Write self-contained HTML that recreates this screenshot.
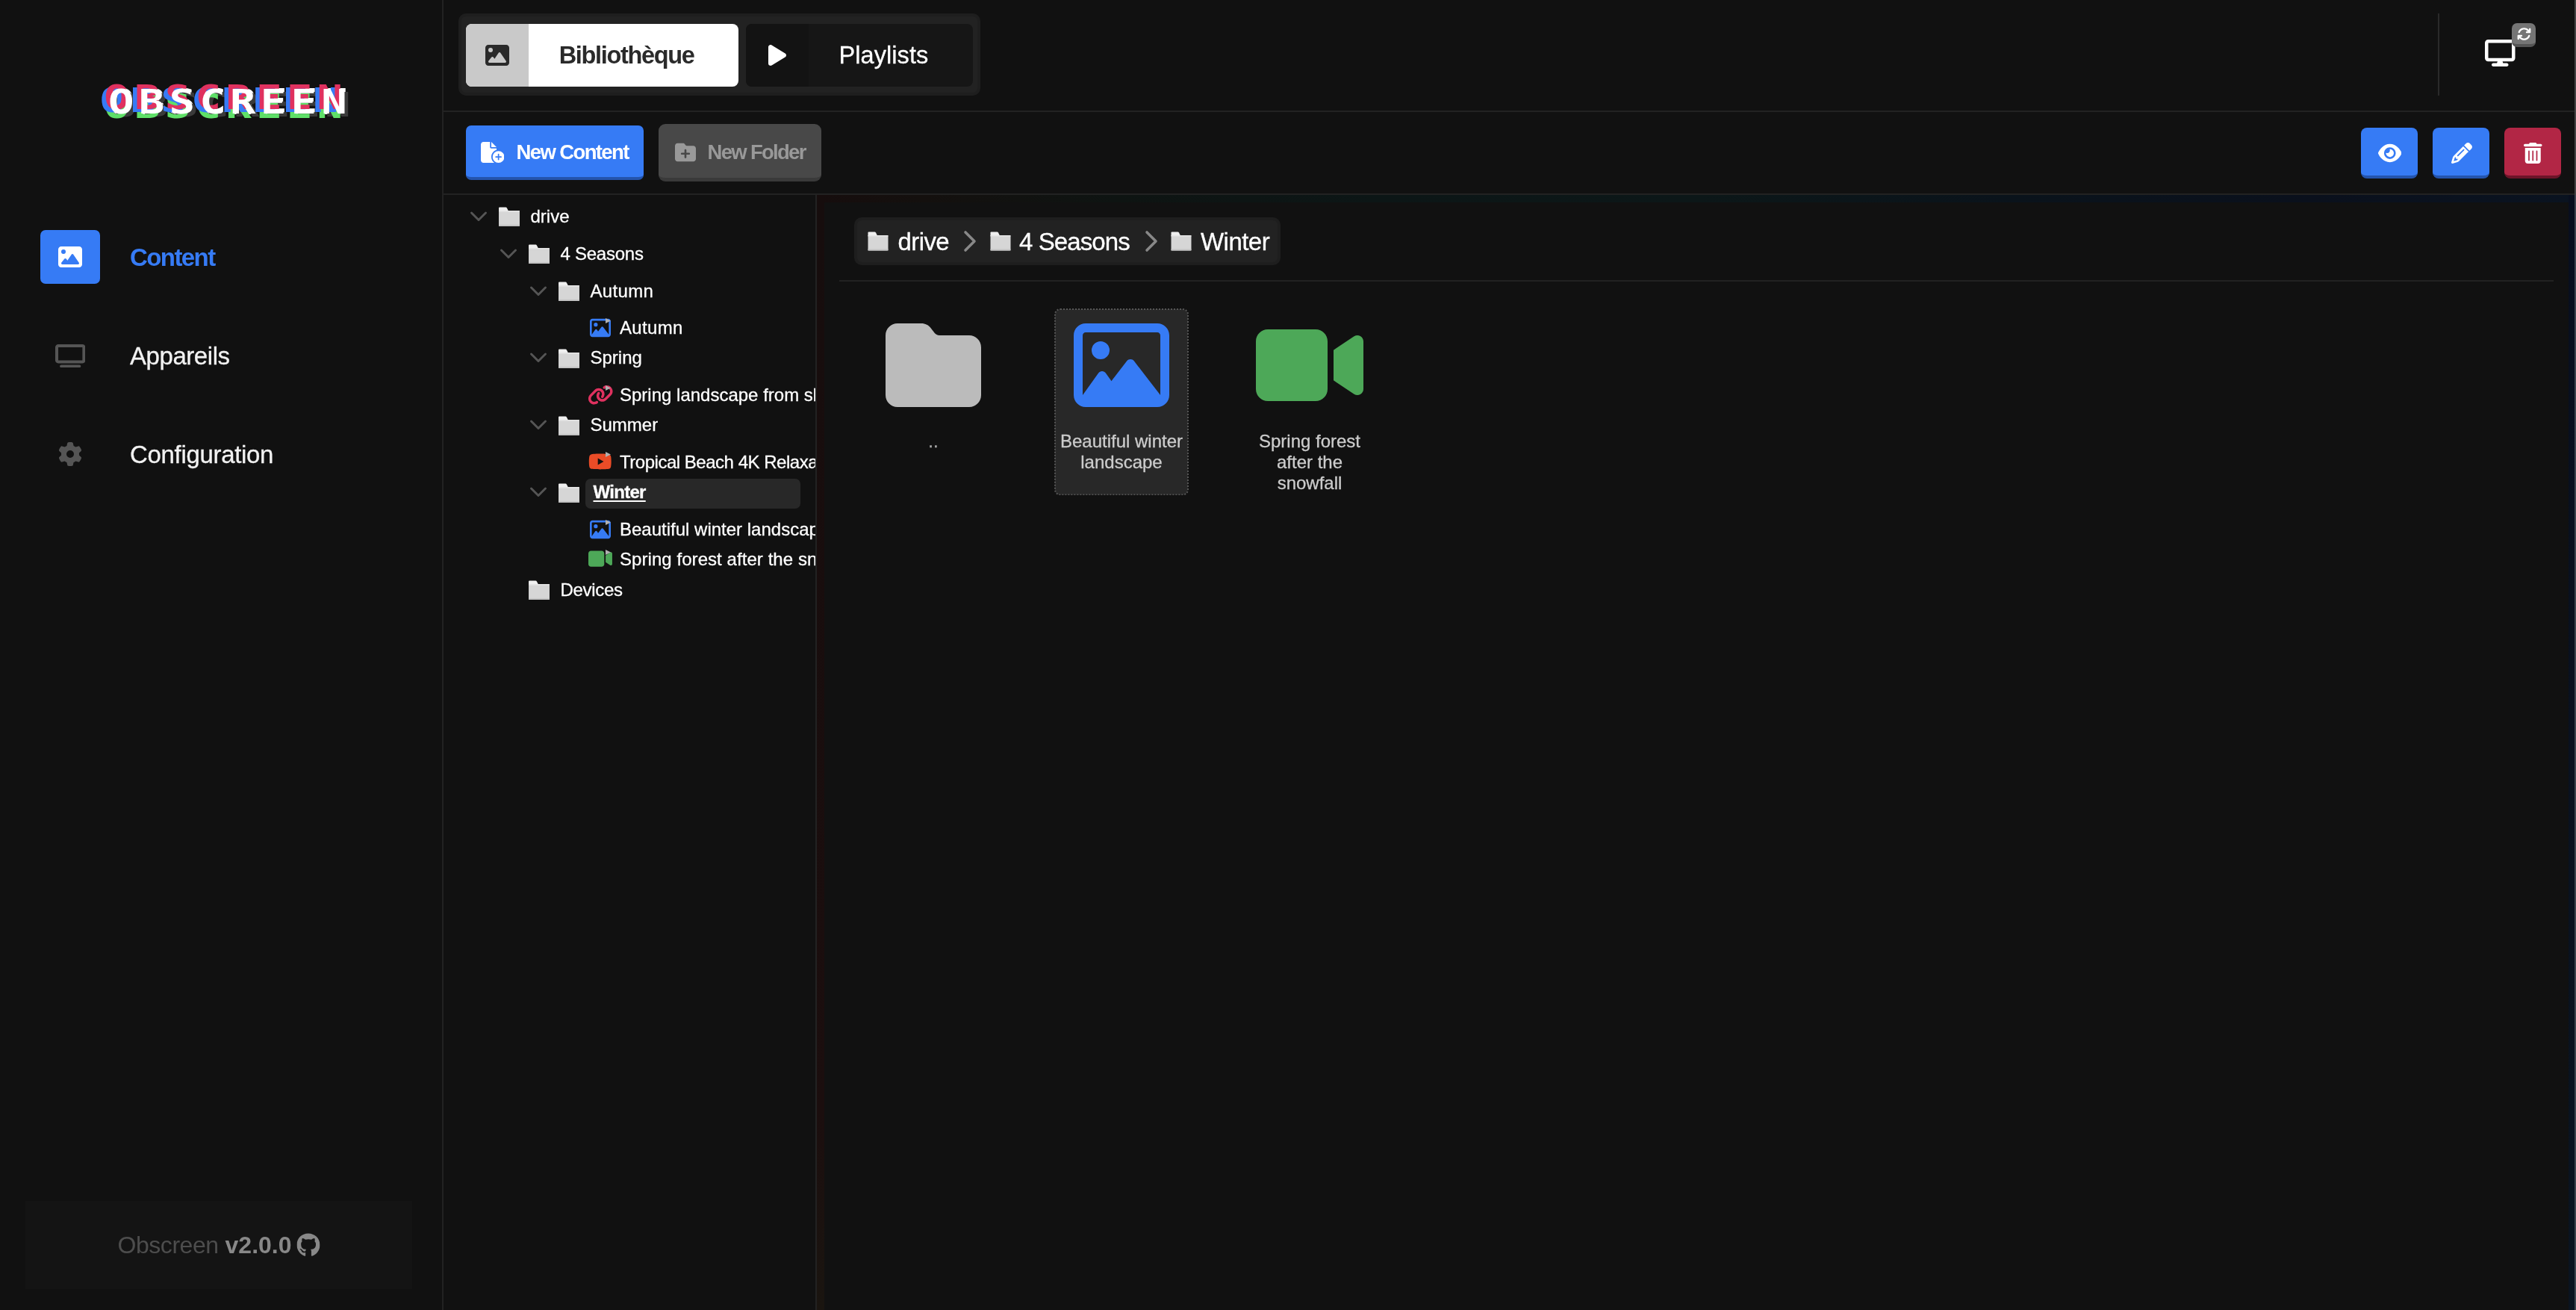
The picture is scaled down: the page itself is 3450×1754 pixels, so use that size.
<!DOCTYPE html>
<html lang="fr"><head><meta charset="utf-8"><title>Obscreen</title><style>
*{box-sizing:border-box;margin:0;padding:0}
html,body{width:3450px;height:1754px;overflow:hidden;background:#111;color:#fff;font-family:"Liberation Sans",sans-serif;}
.abs{position:absolute}
.t{position:absolute;white-space:nowrap;line-height:1;}
svg{display:block}
.hl{position:absolute;background:#222;height:2px}
.vl{position:absolute;background:#222;width:2px}
.tt{font-size:24px;letter-spacing:0;color:#fff;-webkit-text-stroke:0.3px #fff}
.lbl{-webkit-text-stroke:0.3px #ccc;position:absolute;text-align:center;font-size:24px;line-height:28.2px;color:#ccc;transform:translate(-50%,0);white-space:nowrap}
</style></head><body>
<div id="app" style="position:absolute;left:0;top:0;width:3450px;height:1754px;will-change:transform">
<div class="vl" style="left:592px;top:0;height:1754px"></div>
<div class="t" id="logo" style="left:308.2px;top:136.6px;transform:translate(-50%,-50%) scaleX(1.29);font-family:'DejaVu Sans Mono','Liberation Mono',monospace;font-weight:700;font-size:44.5px;letter-spacing:4.8px;color:#fff;-webkit-text-stroke:2px #fff;paint-order:stroke fill;text-shadow:-4.4px -6px 0 #e0315f,-8.7px -2px 0 #367bf5,-4.4px 6.5px 0 #5fe068,3.6px 4px 0 #3a3a3a;">OBSCREEN</div>
<div class="abs" style="left:54px;top:308px;width:80px;height:72px;background:#367BF5;border-radius:7px"></div>
<div class="abs" style="left:78.00px;top:328.00px;"><svg viewBox="0 0 512 512" width="32.00" height="32.00" style=""><path fill="#fff" d="M0 96C0 60.7 28.7 32 64 32l384 0c35.3 0 64 28.700 64 64l0 320c0 35.300-28.700 64-64 64L64 480c-35.300 0-64-28.700-64-64L0 96zM323.800 202.500c-4.500-6.600-11.900-10.500-19.800-10.500s-15.400 3.900-19.800 10.500l-87 127.600L170.700 297c-4.600-5.700-11.500-9-18.700-9s-14.200 3.300-18.700 9l-64 80c-5.800 7.200-6.900 17.100-2.900 25.400s12.400 13.600 21.600 13.600l96 0 32 0 208 0c8.900 0 17.100-4.900 21.200-12.800s3.600-17.400-1.400-24.700l-120-176zM112 192a48 48 0 1 0 0-96 48 48 0 1 0 0 96z"/></svg></div>
<div class="t" id="t1" style="left:174px;top:343.5px;font-size:33px;color:#367BF5;font-weight:700;transform:translate(0,-50%);letter-spacing:-1.582px;">Content</div>
<div class="abs" style="left:73.8px;top:460.5px"><svg preserveAspectRatio="none" viewBox="0 0 640 512" width="40.40" height="31.30" style=""><path fill="#555" d="M64 64V352H576V64H64zM0 64C0 28.700 28.700 0 64 0H576c35.300 0 64 28.700 64 64V352c0 35.300-28.700 64-64 64H64c-35.300 0-64-28.700-64-64V64zM128 448H512c17.700 0 32 14.300 32 32s-14.300 32-32 32H128c-17.700 0-32-14.300-32-32s14.300-32 32-32z"/></svg></div>
<div class="t" id="t2" style="left:174px;top:475.5px;font-size:33px;color:#f2f2f2;font-weight:400;transform:translate(0,-50%);letter-spacing:-0.441px;-webkit-text-stroke:0.3px #f2f2f2;">Appareils</div>
<div class="abs" style="left:78.00px;top:591.90px;"><svg viewBox="0 0 512 512" width="32.00" height="32.00" style=""><path fill="#555" d="M495.900 166.600c3.200 8.700 .5 18.400-6.400 24.600l-43.300 39.400c1.100 8.300 1.700 16.800 1.700 25.400s-.6 17.100-1.700 25.400l43.300 39.400c6.900 6.200 9.600 15.900 6.400 24.600c-4.400 11.900-9.700 23.300-15.800 34.300l-4.700 8.100c-6.600 11-14 21.400-22.100 31.200c-5.900 7.200-15.700 9.600-24.500 6.800l-55.700-17.700c-13.400 10.300-28.200 18.900-44 25.400l-12.500 57.100c-2 9.100-9 16.300-18.200 17.800c-13.800 2.300-28 3.500-42.500 3.500s-28.700-1.200-42.500-3.500c-9.200-1.500-16.200-8.700-18.200-17.800l-12.500-57.100c-15.800-6.500-30.600-15.100-44-25.400L83.100 425.900c-8.800 2.800-18.600 .3-24.500-6.800c-8.100-9.800-15.500-20.200-22.100-31.200l-4.700-8.100c-6.100-11-11.400-22.400-15.800-34.300c-3.200-8.700-.5-18.400 6.400-24.600l43.300-39.400C64.600 273.100 64 264.600 64 256s.6-17.100 1.700-25.400L22.400 191.200c-6.900-6.200-9.600-15.900-6.400-24.600c4.400-11.900 9.700-23.300 15.800-34.300l4.700-8.100c6.600-11 14-21.400 22.100-31.200c5.900-7.200 15.700-9.600 24.500-6.800l55.700 17.700c13.400-10.300 28.200-18.900 44-25.400l12.500-57.100c2-9.100 9-16.300 18.200-17.800C227.300 1.200 241.500 0 256 0s28.700 1.200 42.500 3.500c9.200 1.500 16.200 8.700 18.200 17.800l12.500 57.100c15.800 6.500 30.600 15.100 44 25.400l55.700-17.700c8.800-2.800 18.600-.3 24.500 6.800c8.100 9.800 15.500 20.200 22.100 31.200l4.700 8.100c6.100 11 11.400 22.400 15.800 34.300zM256 336a80 80 0 1 0 0-160 80 80 0 1 0 0 160z"/></svg></div>
<div class="t" id="t3" style="left:174px;top:607.5px;font-size:33px;color:#f2f2f2;font-weight:400;transform:translate(0,-50%);letter-spacing:-0.321px;-webkit-text-stroke:0.3px #f2f2f2;">Configuration</div>
<div class="abs" style="left:34px;top:1608px;width:518px;height:118px;background:#141414"></div>
<div class="t" id="foot" style="left:293px;top:1667px;transform:translate(-50%,-50%);font-size:32px;color:#4d4d4d;display:flex;align-items:center"><span style="letter-spacing:-0.45px">Obscreen</span>&nbsp;<b style="color:#888">v2.0.0</b><svg viewBox="0 0 496 512" width="31.00" height="32.00" style="margin-left:7px"><path fill="#888" d="M165.900 397.400c0 2-2.300 3.600-5.200 3.600-3.300.3-5.600-1.300-5.600-3.600 0-2 2.300-3.600 5.200-3.600 3-.3 5.600 1.300 5.600 3.600zm-31.100-4.500c-.7 2 1.300 4.300 4.300 4.900 2.600 1 5.600 0 6.200-2s-1.300-4.300-4.300-5.200c-2.600-.7-5.500.3-6.200 2.300zm44.200-1.700c-2.900.7-4.900 2.600-4.600 4.900.3 2 2.900 3.300 5.900 2.600 2.900-.7 4.900-2.600 4.600-4.600-.3-1.900-3-3.200-5.900-2.900zM244.800 8C106.100 8 0 113.300 0 252c0 110.900 69.800 205.800 169.500 239.200 12.800 2.300 17.300-5.600 17.300-12.100 0-6.200-.3-40.400-.3-61.400 0 0-70 15-84.700-29.800 0 0-11.400-29.100-27.800-36.600 0 0-22.900-15.700 1.600-15.400 0 0 24.900 2 38.600 25.800 21.900 38.600 58.600 27.500 72.900 20.900 2.300-16 8.800-27.100 16-33.700-55.900-6.200-112.300-14.300-112.300-110.500 0-27.500 7.600-41.300 23.600-58.900-2.600-6.500-11.100-33.300 2.600-67.900 20.900-6.500 69 27 69 27 20-5.600 41.500-8.500 62.800-8.500s42.800 2.900 62.800 8.500c0 0 48.100-33.600 69-27 13.700 34.700 5.200 61.400 2.600 67.900 16 17.700 25.800 31.500 25.800 58.900 0 96.500-58.900 104.200-114.800 110.500 9.200 7.900 17 22.900 17 46.400 0 33.700-.3 75.400-.3 83.600 0 6.500 4.600 14.400 17.300 12.100C428.200 457.800 496 362.900 496 252 496 113.300 383.500 8 244.800 8z"/></svg></div>
<div class="abs" style="left:614px;top:18px;width:699px;height:110px;background:#222;border:4px solid #1e1e1e;border-radius:10px"></div>
<div class="abs" style="left:624px;top:32px;width:365px;height:84px;background:#fff;border-radius:8px;overflow:hidden"><div style="width:84px;height:84px;background:#c9c9c9"></div></div>
<div class="abs" style="left:650.00px;top:58.00px;"><svg viewBox="0 0 512 512" width="32.00" height="32.00" style=""><path fill="#2a2a2a" d="M0 96C0 60.7 28.7 32 64 32l384 0c35.3 0 64 28.700 64 64l0 320c0 35.300-28.700 64-64 64L64 480c-35.300 0-64-28.700-64-64L0 96zM323.800 202.500c-4.500-6.600-11.900-10.500-19.800-10.500s-15.400 3.900-19.800 10.500l-87 127.600L170.700 297c-4.600-5.700-11.500-9-18.700-9s-14.200 3.300-18.700 9l-64 80c-5.800 7.200-6.900 17.100-2.900 25.400s12.400 13.600 21.600 13.600l96 0 32 0 208 0c8.900 0 17.100-4.900 21.200-12.800s3.600-17.400-1.400-24.700l-120-176zM112 192a48 48 0 1 0 0-96 48 48 0 1 0 0 96z"/></svg></div>
<div class="t" id="t4" style="left:748.7px;top:73.9px;font-size:32.5px;color:#2a2a2a;font-weight:700;transform:translate(0,-50%);letter-spacing:-1.334px;">Bibliothèque</div>
<div class="abs" style="left:999px;top:32px;width:304px;height:84px;background:#161616;border-radius:8px;overflow:hidden"><div style="width:84px;height:84px;background:#131313"></div></div>
<div class="abs" style="left:1029.00px;top:58.00px;"><svg viewBox="0 0 384 512" width="24.00" height="32.00" style=""><path fill="#fff" d="M73 39c-14.800-9.100-33.400-9.400-48.500-.9S0 62.600 0 80L0 432c0 17.400 9.400 33.400 24.500 41.900s33.700 8.100 48.500-.9L361 297c14.300-8.700 23-24.200 23-41s-8.700-32.200-23-41L73 39z"/></svg></div>
<div class="t" id="t5" style="left:1123.6px;top:73.9px;font-size:32.5px;color:#fff;font-weight:400;transform:translate(0,-50%);letter-spacing:0.053px;-webkit-text-stroke:0.3px #fff;">Playlists</div>
<div class="vl" style="left:3265px;top:18px;height:110px;background:#2a2a2a"></div>
<div class="abs" style="left:3328.25px;top:53.20px;"><svg viewBox="0 0 576 512" width="40.50" height="36.00" style=""><path fill="#fff" d="M64 0C28.700 0 0 28.700 0 64V352c0 35.300 28.700 64 64 64H240l-10.700 32H160c-17.700 0-32 14.300-32 32s14.300 32 32 32H416c17.700 0 32-14.300 32-32s-14.300-32-32-32H346.700L336 416H512c35.300 0 64-28.700 64-64V64c0-35.300-28.700-64-64-64H64zM512 64V352H64V64H512z"/></svg></div>
<div class="abs" style="left:3364px;top:31px;width:32px;height:32px;background:#757575;border-bottom:4px solid #555;border-radius:7px"></div>
<div class="abs" style="left:3371.10px;top:35.70px;"><svg viewBox="0 0 512 512" width="19.00" height="19.00" style=""><path fill="#fff" d="M105.100 202.600c7.700-21.800 20.200-42.300 37.800-59.800c62.500-62.500 163.800-62.500 226.300 0L386.300 160H352c-17.700 0-32 14.300-32 32s14.300 32 32 32H463.500c0 0 0 0 0 0h.4c17.700 0 32-14.300 32-32V80c0-17.700-14.300-32-32-32s-32 14.300-32 32v35.200L414.400 97.600c-87.500-87.500-229.300-87.500-316.800 0C73.200 122 55.600 150.700 44.800 181.400c-5.900 16.700 2.900 34.900 19.500 40.800s34.900-2.900 40.800-19.500zM39 289.300c-5 1.500-9.800 4.200-13.700 8.200c-4 4-6.700 8.800-8.100 14c-.3 1.200-.6 2.500-.8 3.800c-.3 1.700-.4 3.400-.4 5.100V432c0 17.700 14.300 32 32 32s32-14.300 32-32V396.900l17.600 17.500 0 0c87.500 87.400 229.300 87.400 316.700 0c24.400-24.400 42.100-53.100 52.900-83.700c5.900-16.700-2.900-34.900-19.500-40.800s-34.900 2.900-40.800 19.500c-7.700 21.800-20.200 42.300-37.800 59.800c-62.500 62.500-163.800 62.500-226.300 0l-.1-.1L125.600 352H160c17.700 0 32-14.300 32-32s-14.300-32-32-32H48.400c-1.600 0-3.200 .1-4.800 .3s-3.100 .5-4.600 1z"/></svg></div>
<div class="hl" style="left:594px;top:148px;width:2856px"></div>
<div class="abs" style="left:624px;top:168px;width:238px;height:73px;background:#367BF5;border-bottom:4px solid #2454ad;border-radius:7px"></div>
<div class="abs" style="left:643.85px;top:189.60px;"><svg viewBox="0 0 576 512" width="31.50" height="28.00" style=""><path fill="#fff" d="M0 64C0 28.700 28.700 0 64 0H224V128c0 17.700 14.300 32 32 32H384v38.600C310.100 219.500 256 287.400 256 368c0 59.100 29.100 111.300 73.700 143.300c-3.200 .5-6.400 .7-9.700 .7H64c-35.300 0-64-28.700-64-64V64zm384 64H256V0L384 128zm48 96a144 144 0 1 1 0 288 144 144 0 1 1 0-288zm16 80c0-8.800-7.200-16-16-16s-16 7.200-16 16v48H368c-8.800 0-16 7.200-16 16s7.200 16 16 16h48v48c0 8.800 7.200 16 16 16s16-7.200 16-16V384h48c8.800 0 16-7.200 16-16s-7.200-16-16-16H448V304z"/></svg></div>
<div class="t" id="t6" style="left:691.5px;top:204px;font-size:27.5px;color:#fff;font-weight:700;transform:translate(0,-50%);letter-spacing:-1.619px;">New Content</div>
<div class="abs" style="left:882px;top:166px;width:218px;height:77px;background:#484848;border-bottom:5px solid #3a3a3a;border-radius:9px"></div>
<div class="abs" style="left:903.50px;top:189.70px;"><svg viewBox="0 0 512 512" width="28.00" height="28.00" style=""><path fill="#999" d="M512 416c0 35.300-28.700 64-64 64H64c-35.300 0-64-28.700-64-64V96C0 60.700 28.700 32 64 32H192c20.100 0 39.100 9.500 51.200 25.600l19.200 25.600c6 8.100 15.500 12.800 25.600 12.800H448c35.300 0 64 28.700 64 64V416zM232 376c0 13.300 10.700 24 24 24s24-10.700 24-24V312h64c13.300 0 24-10.700 24-24s-10.700-24-24-24H280V200c0-13.300-10.700-24-24-24s-24 10.700-24 24v64H168c-13.300 0-24 10.700-24 24s10.700 24 24 24h64v64z"/></svg></div>
<div class="t" id="t7" style="left:947.6px;top:204px;font-size:27.5px;color:#999;font-weight:700;transform:translate(0,-50%);letter-spacing:-1.716px;">New Folder</div>
<div class="abs" style="left:3162px;top:171px;width:76px;height:68px;background:#367BF5;border-bottom:4px solid #2454ad;border-radius:8px"></div>
<div class="abs" style="left:3184.75px;top:190.60px;"><svg viewBox="0 0 576 512" width="31.50" height="28.00" style=""><path fill="#fff" d="M288 32c-80.800 0-145.500 36.800-192.600 80.600C48.600 156 17.300 208 2.500 243.700c-3.300 7.900-3.300 16.700 0 24.600C17.300 304 48.600 356 95.400 399.400C142.500 443.200 207.200 480 288 480s145.500-36.800 192.600-80.600c46.800-43.500 78.100-95.400 93-131.100c3.300-7.900 3.300-16.700 0-24.600c-14.900-35.700-46.200-87.700-93-131.100C433.500 68.800 368.800 32 288 32zM144 256a144 144 0 1 1 288 0 144 144 0 1 1 -288 0zm144-64c0 35.300-28.700 64-64 64c-7.100 0-13.900-1.200-20.300-3.300c-5.500-1.800-11.900 1.600-11.700 7.400c.3 6.900 1.300 13.800 3.200 20.700c13.700 51.200 66.400 81.600 117.600 67.900s81.600-66.400 67.900-117.600c-11.100-41.500-47.800-69.400-88.600-71.100c-5.800-.2-9.200 6.100-7.400 11.700c2.100 6.400 3.300 13.200 3.300 20.300z"/></svg></div>
<div class="abs" style="left:3258px;top:171px;width:76px;height:68px;background:#367BF5;border-bottom:4px solid #2454ad;border-radius:8px"></div>
<div class="abs" style="left:3282.50px;top:190.60px;"><svg viewBox="0 0 512 512" width="28.00" height="28.00" style=""><path fill="#fff" d="M410.300 231l11.300-11.300-33.900-33.900-62.100-62.100L291.700 89.800l-11.300 11.300-22.600 22.600L58.600 322.900c-10.400 10.400-18 23.300-22.200 37.400L1 480.700c-2.500 8.400-.2 17.500 6.100 23.700s15.300 8.500 23.700 6.100l120.300-35.400c14.100-4.200 27-11.800 37.400-22.200L387.700 253.700 410.300 231zM160 399.400l-9.100 22.700c-4 3.100-8.500 5.400-13.300 6.900L59.400 452l23-78.100c1.400-4.900 3.800-9.400 6.900-13.300l22.700-9.100v32c0 8.800 7.200 16 16 16h32zM362.700 18.700L348.300 33.200 325.700 55.800 314.300 67.100l33.900 33.900 62.100 62.100 33.900 33.900 11.300-11.300 22.600-22.600 14.500-14.500c25-25 25-65.500 0-90.500L453.300 18.700c-25-25-65.500-25-90.500 0zm-47.400 168l-144 144c-6.200 6.200-16.400 6.200-22.600 0s-6.200-16.400 0-22.600l144-144c6.200-6.200 16.400-6.200 22.600 0s6.200 16.400 0 22.600z"/></svg></div>
<div class="abs" style="left:3354px;top:171px;width:76px;height:68px;background:#b22645;border-bottom:4px solid #6d1429;border-radius:8px"></div>
<div class="abs" style="left:3380.25px;top:190.60px;"><svg viewBox="0 0 448 512" width="24.50" height="28.00" style=""><path fill="#fff" d="M135.200 17.700C140.600 6.800 151.700 0 163.800 0H284.200c12.100 0 23.200 6.800 28.600 17.700L320 32h96c17.700 0 32 14.300 32 32s-14.300 32-32 32H32C14.300 96 0 81.700 0 64S14.300 32 32 32h96l7.200-14.300zM32 128H416V448c0 35.300-28.700 64-64 64H96c-35.300 0-64-28.700-64-64V128zm96 64c-8.800 0-16 7.200-16 16V432c0 8.800 7.200 16 16 16s16-7.200 16-16V208c0-8.800-7.200-16-16-16zm96 0c-8.800 0-16 7.200-16 16V432c0 8.800 7.200 16 16 16s16-7.200 16-16V208c0-8.800-7.200-16-16-16zm96 0c-8.800 0-16 7.200-16 16V432c0 8.800 7.200 16 16 16s16-7.200 16-16V208c0-8.800-7.200-16-16-16z"/></svg></div>
<div class="hl" style="left:594px;top:259px;width:2856px"></div>
<div class="vl" style="left:3448px;top:0;height:1754px;background:linear-gradient(180deg,#434343 0,#434343 261px,#3b424d 261px,#3b434c 100%)"></div>
<div class="vl" style="left:1092px;top:261px;height:1493px"></div>
<div class="abs" id="tree" style="left:594px;top:261px;width:498px;height:1493px;overflow:hidden">
<svg class="abs" style="left:35px;top:20.799999999999955px" width="24" height="16" viewBox="0 0 24 16"><polyline points="2.5,3 12,12.5 21.5,3" fill="none" stroke="#555" stroke-width="3" stroke-linecap="round" stroke-linejoin="round"/></svg>
<svg class="abs" style="left:73px;top:16.349999999999966px;filter:blur(.6px)" width="29.5" height="26.5" viewBox="0 0 57 52" preserveAspectRatio="none"><path d="M2 3 Q2 1 4 1 L20 1 Q22 1 23 3 L27 11 L2 11 Z" fill="#efefef"/><path d="M2 10 L53 10 Q56 10 56 13 L56 48 Q56 51 53 51 L4 51 Q2 51 2 49 Z" fill="#d6d6d6"/><rect x="2" y="10" width="54" height="3" fill="#e6e6e6"/><rect x="2" y="47" width="54" height="4" fill="#c4c4c4"/></svg>
<div class="t tt" style="left:116.5px;top:16.599999999999977px;font-weight:400;">drive</div>
<svg class="abs" style="left:75px;top:70.69999999999999px" width="24" height="16" viewBox="0 0 24 16"><polyline points="2.5,3 12,12.5 21.5,3" fill="none" stroke="#555" stroke-width="3" stroke-linecap="round" stroke-linejoin="round"/></svg>
<svg class="abs" style="left:113px;top:66.25px;filter:blur(.6px)" width="29.5" height="26.5" viewBox="0 0 57 52" preserveAspectRatio="none"><path d="M2 3 Q2 1 4 1 L20 1 Q22 1 23 3 L27 11 L2 11 Z" fill="#efefef"/><path d="M2 10 L53 10 Q56 10 56 13 L56 48 Q56 51 53 51 L4 51 Q2 51 2 49 Z" fill="#d6d6d6"/><rect x="2" y="10" width="54" height="3" fill="#e6e6e6"/><rect x="2" y="47" width="54" height="4" fill="#c4c4c4"/></svg>
<div class="t tt" style="left:156.5px;top:66.50000000000001px;font-weight:400;letter-spacing:-0.25px;">4 Seasons</div>
<svg class="abs" style="left:115px;top:120.69999999999999px" width="24" height="16" viewBox="0 0 24 16"><polyline points="2.5,3 12,12.5 21.5,3" fill="none" stroke="#555" stroke-width="3" stroke-linecap="round" stroke-linejoin="round"/></svg>
<svg class="abs" style="left:153px;top:116.25px;filter:blur(.6px)" width="29.5" height="26.5" viewBox="0 0 57 52" preserveAspectRatio="none"><path d="M2 3 Q2 1 4 1 L20 1 Q22 1 23 3 L27 11 L2 11 Z" fill="#efefef"/><path d="M2 10 L53 10 Q56 10 56 13 L56 48 Q56 51 53 51 L4 51 Q2 51 2 49 Z" fill="#d6d6d6"/><rect x="2" y="10" width="54" height="3" fill="#e6e6e6"/><rect x="2" y="47" width="54" height="4" fill="#c4c4c4"/></svg>
<div class="t tt" style="left:196.5px;top:116.50000000000001px;font-weight:400;letter-spacing:0.35px;">Autumn</div>
<div class="abs" style="left:196.00px;top:163.80px"><svg viewBox="0 0 512 512" width="28.00" height="28.00" style=""><path fill="#367BF5" d="M448 80c8.800 0 16 7.200 16 16V415.800l-5-6.500-136-176c-4.500-5.900-11.600-9.300-19-9.300s-14.400 3.400-19 9.300L202 340.700l-30.500-42.700C167 291.700 159.800 288 152 288s-15 3.700-19.500 10.100l-80 112L48 416.300l0-.3V96c0-8.800 7.200-16 16-16H448zM64 32C28.700 32 0 60.700 0 96V416c0 35.300 28.700 64 64 64H448c35.300 0 64-28.700 64-64V96c0-35.300-28.700-64-64-64H64zm80 192a48 48 0 1 0 0-96 48 48 0 1 0 0 96z"/></svg></div>
<svg class="abs" style="left:217px;top:164.60000000000002px" width="7" height="7" viewBox="0 0 7 7"><path d="M0 0 L7 3.5 L0 7 Z" fill="#b0b0b0"/></svg>
<div class="t tt" style="left:236px;top:165.8px;font-weight:400;letter-spacing:0.35px;">Autumn</div>
<svg class="abs" style="left:115px;top:210.2px" width="24" height="16" viewBox="0 0 24 16"><polyline points="2.5,3 12,12.5 21.5,3" fill="none" stroke="#555" stroke-width="3" stroke-linecap="round" stroke-linejoin="round"/></svg>
<svg class="abs" style="left:153px;top:205.75px;filter:blur(.6px)" width="29.5" height="26.5" viewBox="0 0 57 52" preserveAspectRatio="none"><path d="M2 3 Q2 1 4 1 L20 1 Q22 1 23 3 L27 11 L2 11 Z" fill="#efefef"/><path d="M2 10 L53 10 Q56 10 56 13 L56 48 Q56 51 53 51 L4 51 Q2 51 2 49 Z" fill="#d6d6d6"/><rect x="2" y="10" width="54" height="3" fill="#e6e6e6"/><rect x="2" y="47" width="54" height="4" fill="#c4c4c4"/></svg>
<div class="t tt" style="left:196.5px;top:206.0px;font-weight:400;">Spring</div>
<div class="abs" style="left:192.75px;top:254.10px"><svg viewBox="0 0 640 512" width="34.50" height="27.60" style=""><path fill="#e0315f" d="M579.800 267.700c56.500-56.500 56.500-148 0-204.500c-50-50-128.800-56.500-186.300-15.400l-1.600 1.100c-14.400 10.300-17.700 30.300-7.400 44.600s30.300 17.700 44.600 7.400l1.600-1.100c32.100-22.900 76-19.300 103.800 8.600c31.500 31.500 31.500 82.500 0 114L422.300 334.800c-31.500 31.500-82.500 31.500-114 0c-27.900-27.900-31.500-71.800-8.600-103.800l1.100-1.600c10.300-14.400 6.900-34.400-7.400-44.600s-34.400-6.900-44.600 7.400l-1.100 1.600C206.500 251.200 213 330 263 380c56.500 56.500 148 56.500 204.500 0L579.800 267.700zM60.200 244.300c-56.500 56.500-56.500 148 0 204.500c50 50 128.800 56.500 186.300 15.400l1.600-1.100c14.400-10.300 17.700-30.300 7.400-44.600s-30.300-17.700-44.600-7.400l-1.600 1.100c-32.100 22.900-76 19.300-103.800-8.600C74 372 74 321 105.500 289.500L217.700 177.200c31.500-31.500 82.500-31.500 114 0c27.900 27.900 31.500 71.800 8.600 103.900l-1.100 1.600c-10.300 14.400-6.900 34.400 7.400 44.600s34.400 6.900 44.600-7.400l1.100-1.600C433.500 260.800 427 182 377 132c-56.500-56.500-148-56.500-204.500 0L60.200 244.300z"/></svg></div>
<svg class="abs" style="left:217px;top:254.79999999999995px" width="7" height="7" viewBox="0 0 7 7"><path d="M0 0 L7 3.5 L0 7 Z" fill="#b0b0b0"/></svg>
<div class="t tt" style="left:236px;top:255.99999999999994px;font-weight:400;">Spring landscape from sky</div>
<svg class="abs" style="left:115px;top:300.0px" width="24" height="16" viewBox="0 0 24 16"><polyline points="2.5,3 12,12.5 21.5,3" fill="none" stroke="#555" stroke-width="3" stroke-linecap="round" stroke-linejoin="round"/></svg>
<svg class="abs" style="left:153px;top:295.55000000000007px;filter:blur(.6px)" width="29.5" height="26.5" viewBox="0 0 57 52" preserveAspectRatio="none"><path d="M2 3 Q2 1 4 1 L20 1 Q22 1 23 3 L27 11 L2 11 Z" fill="#efefef"/><path d="M2 10 L53 10 Q56 10 56 13 L56 48 Q56 51 53 51 L4 51 Q2 51 2 49 Z" fill="#d6d6d6"/><rect x="2" y="10" width="54" height="3" fill="#e6e6e6"/><rect x="2" y="47" width="54" height="4" fill="#c4c4c4"/></svg>
<div class="t tt" style="left:196.5px;top:295.8px;font-weight:400;">Summer</div>
<div class="abs" style="left:201px;top:349.4px;width:16px;height:16px;background:#111"></div>
<div class="abs" style="left:194.25px;top:343.40px"><svg viewBox="0 0 576 512" width="31.50" height="28.00" style=""><path fill="#ea4c27" d="M549.655 124.083c-6.281-23.650-24.787-42.276-48.284-48.597C458.781 64 288 64 288 64S117.220 64 74.629 75.486c-23.497 6.322-42.003 24.947-48.284 48.597-11.412 42.867-11.412 132.305-11.412 132.305s0 89.438 11.412 132.305c6.281 23.650 24.787 41.500 48.284 47.821C117.220 448 288 448 288 448s170.780 0 213.371-11.486c23.497-6.321 42.003-24.171 48.284-47.821 11.412-42.867 11.412-132.305 11.412-132.305s0-89.438-11.412-132.305zm-317.510 213.508V175.185l142.739 81.205-142.739 81.201z"/></svg></div>
<svg class="abs" style="left:217px;top:344.4px" width="7" height="7" viewBox="0 0 7 7"><path d="M0 0 L7 3.5 L0 7 Z" fill="#b0b0b0"/></svg>
<div class="t tt" style="left:236px;top:345.59999999999997px;font-weight:400;letter-spacing:-0.48px;">Tropical Beach 4K Relaxation</div>
<svg class="abs" style="left:115px;top:390.1px" width="24" height="16" viewBox="0 0 24 16"><polyline points="2.5,3 12,12.5 21.5,3" fill="none" stroke="#555" stroke-width="3" stroke-linecap="round" stroke-linejoin="round"/></svg>
<svg class="abs" style="left:153px;top:385.6500000000001px;filter:blur(.6px)" width="29.5" height="26.5" viewBox="0 0 57 52" preserveAspectRatio="none"><path d="M2 3 Q2 1 4 1 L20 1 Q22 1 23 3 L27 11 L2 11 Z" fill="#efefef"/><path d="M2 10 L53 10 Q56 10 56 13 L56 48 Q56 51 53 51 L4 51 Q2 51 2 49 Z" fill="#d6d6d6"/><rect x="2" y="10" width="54" height="3" fill="#e6e6e6"/><rect x="2" y="47" width="54" height="4" fill="#c4c4c4"/></svg>
<div class="abs" style="left:190px;top:380px;width:288px;height:40px;background:#282828;border-radius:7px"></div>
<div class="t tt" style="left:200.5px;top:385.90000000000003px;font-weight:700;text-decoration:underline;text-decoration-thickness:2px;text-underline-offset:3px;letter-spacing:-0.7px;">Winter</div>
<div class="abs" style="left:196.00px;top:433.70px"><svg viewBox="0 0 512 512" width="28.00" height="28.00" style=""><path fill="#367BF5" d="M448 80c8.800 0 16 7.200 16 16V415.800l-5-6.500-136-176c-4.500-5.900-11.600-9.300-19-9.300s-14.400 3.400-19 9.300L202 340.700l-30.500-42.700C167 291.700 159.800 288 152 288s-15 3.700-19.500 10.100l-80 112L48 416.300l0-.3V96c0-8.800 7.200-16 16-16H448zM64 32C28.700 32 0 60.700 0 96V416c0 35.300 28.700 64 64 64H448c35.300 0 64-28.700 64-64V96c0-35.300-28.700-64-64-64H64zm80 192a48 48 0 1 0 0-96 48 48 0 1 0 0 96z"/></svg></div>
<svg class="abs" style="left:217px;top:434.5px" width="7" height="7" viewBox="0 0 7 7"><path d="M0 0 L7 3.5 L0 7 Z" fill="#b0b0b0"/></svg>
<div class="t tt" style="left:236px;top:435.7px;font-weight:400;">Beautiful winter landscape</div>
<div class="abs" style="left:194.02px;top:473.30px"><svg viewBox="0 0 576 512" width="31.95" height="28.40" style=""><path fill="#4da858" d="M0 128C0 92.700 28.700 64 64 64H320c35.300 0 64 28.700 64 64V384c0 35.300-28.700 64-64 64H64c-35.300 0-64-28.700-64-64V128zM559.100 99.800c10.400 5.600 16.900 16.400 16.900 28.200V384c0 11.800-6.500 22.600-16.900 28.200s-23 5-32.900-1.600l-96-64L416 337.100V320 192 174.900l14.200-9.500 96-64c9.800-6.500 22.400-7.200 32.900-1.600z"/></svg></div>
<svg class="abs" style="left:217px;top:474.5px" width="7" height="7" viewBox="0 0 7 7"><path d="M0 0 L7 3.5 L0 7 Z" fill="#b0b0b0"/></svg>
<div class="t tt" style="left:236px;top:475.7px;font-weight:400;letter-spacing:0.06px;">Spring forest after the snowfall</div>
<svg class="abs" style="left:113px;top:516.25px;filter:blur(.6px)" width="29.5" height="26.5" viewBox="0 0 57 52" preserveAspectRatio="none"><path d="M2 3 Q2 1 4 1 L20 1 Q22 1 23 3 L27 11 L2 11 Z" fill="#efefef"/><path d="M2 10 L53 10 Q56 10 56 13 L56 48 Q56 51 53 51 L4 51 Q2 51 2 49 Z" fill="#d6d6d6"/><rect x="2" y="10" width="54" height="3" fill="#e6e6e6"/><rect x="2" y="47" width="54" height="4" fill="#c4c4c4"/></svg>
<div class="t tt" style="left:156.5px;top:516.5px;font-weight:400;letter-spacing:-0.3px;">Devices</div>
</div>
<div class="abs" style="left:1094px;top:261px;width:2354px;height:10px;background:linear-gradient(90deg,#160d0d 0%,#14100e 6%,#0e1412 17%,#0c1616 32%,#0c1718 50%,#0a131b 68%,#0a101c 85%,#0a1320 100%)"></div>
<div class="abs" style="left:1094px;top:261px;width:10px;height:1493px;background:linear-gradient(180deg,#160d0d 0%,#1b0e0e 82%,#1a1510 100%)"></div>
<div class="abs" style="left:3440px;top:261px;width:8px;height:1493px;background:linear-gradient(180deg,#080e1e,#0a1420)"></div>
<div class="abs" style="left:1144px;top:291px;width:571px;height:64px;background:#222;border:4px solid #1e1e1e;border-radius:10px"></div>
<svg class="abs" style="left:1161.4px;top:310px;filter:blur(.6px)" width="29.5" height="26" viewBox="0 0 57 52"><path d="M2 3 Q2 1 4 1 L20 1 Q22 1 23 3 L27 11 L2 11 Z" fill="#efefef"/><path d="M2 10 L53 10 Q56 10 56 13 L56 48 Q56 51 53 51 L4 51 Q2 51 2 49 Z" fill="#d6d6d6"/><rect x="2" y="10" width="54" height="3" fill="#e6e6e6"/><rect x="2" y="47" width="54" height="4" fill="#c4c4c4"/></svg>
<div class="t" id="t8" style="left:1202.6px;top:322.8px;font-size:33px;color:#fff;font-weight:400;transform:translate(0,-50%);letter-spacing:-0.620px;-webkit-text-stroke:0.3px #fff;">drive</div>
<svg class="abs" style="left:1290px;top:308.3px" width="20" height="30" viewBox="0 0 20 30"><polyline points="3,3 15,15 3,27" fill="none" stroke="#888" stroke-width="3.6" stroke-linecap="round" stroke-linejoin="round"/></svg>
<svg class="abs" style="left:1324.6px;top:310px;filter:blur(.6px)" width="29.5" height="26" viewBox="0 0 57 52"><path d="M2 3 Q2 1 4 1 L20 1 Q22 1 23 3 L27 11 L2 11 Z" fill="#efefef"/><path d="M2 10 L53 10 Q56 10 56 13 L56 48 Q56 51 53 51 L4 51 Q2 51 2 49 Z" fill="#d6d6d6"/><rect x="2" y="10" width="54" height="3" fill="#e6e6e6"/><rect x="2" y="47" width="54" height="4" fill="#c4c4c4"/></svg>
<div class="t" id="t9" style="left:1365px;top:322.8px;font-size:33px;color:#fff;font-weight:400;transform:translate(0,-50%);letter-spacing:-0.913px;-webkit-text-stroke:0.3px #fff;">4 Seasons</div>
<svg class="abs" style="left:1532.5px;top:308.3px" width="20" height="30" viewBox="0 0 20 30"><polyline points="3,3 15,15 3,27" fill="none" stroke="#888" stroke-width="3.6" stroke-linecap="round" stroke-linejoin="round"/></svg>
<svg class="abs" style="left:1566.8px;top:310px;filter:blur(.6px)" width="29.5" height="26" viewBox="0 0 57 52"><path d="M2 3 Q2 1 4 1 L20 1 Q22 1 23 3 L27 11 L2 11 Z" fill="#efefef"/><path d="M2 10 L53 10 Q56 10 56 13 L56 48 Q56 51 53 51 L4 51 Q2 51 2 49 Z" fill="#d6d6d6"/><rect x="2" y="10" width="54" height="3" fill="#e6e6e6"/><rect x="2" y="47" width="54" height="4" fill="#c4c4c4"/></svg>
<div class="t" id="t10" style="left:1608px;top:322.8px;font-size:33px;color:#fff;font-weight:400;transform:translate(0,-50%);letter-spacing:-0.539px;-webkit-text-stroke:0.3px #fff;">Winter</div>
<div class="hl" style="left:1124px;top:375px;width:2296px"></div>
<div class="abs" style="left:1186.00px;top:425.00px;"><svg viewBox="0 0 512 512" width="128.00" height="128.00" style=""><path fill="#bbb" d="M64 480H448c35.300 0 64-28.700 64-64V160c0-35.300-28.700-64-64-64H288c-10.100 0-19.600-4.700-25.600-12.800L243.200 57.600C231.100 41.500 212.100 32 192 32H64C28.700 32 0 60.700 0 96V416c0 35.300 28.700 64 64 64z"/></svg></div>
<div class="t" id="t11" style="left:1250px;top:591px;font-size:24px;color:#aaa;font-weight:400;transform:translate(-50%,-50%);-webkit-text-stroke:0.3px #aaa;">..</div>
<svg class="abs" style="left:1412px;top:412.5px" width="180" height="250.5"><rect x="1" y="1" width="178" height="248.5" rx="7" fill="#282828" stroke="#555" stroke-width="2" stroke-dasharray="2 2"/></svg>
<div class="abs" style="left:1438.00px;top:425.00px;"><svg viewBox="0 0 512 512" width="128.00" height="128.00" style=""><path fill="#367BF5" d="M448 80c8.800 0 16 7.200 16 16V415.800l-5-6.500-136-176c-4.500-5.900-11.600-9.300-19-9.300s-14.400 3.400-19 9.300L202 340.700l-30.500-42.700C167 291.700 159.800 288 152 288s-15 3.700-19.500 10.100l-80 112L48 416.300l0-.3V96c0-8.800 7.200-16 16-16H448zM64 32C28.700 32 0 60.700 0 96V416c0 35.300 28.700 64 64 64H448c35.300 0 64-28.700 64-64V96c0-35.300-28.700-64-64-64H64zm80 192a48 48 0 1 0 0-96 48 48 0 1 0 0 96z"/></svg></div>
<div class="lbl" id="lb1" style="left:1502px;top:576.8px">Beautiful winter<br>landscape</div>
<div class="abs" style="left:1682.00px;top:425.00px;"><svg viewBox="0 0 576 512" width="144.00" height="128.00" style=""><path fill="#4da858" d="M0 128C0 92.700 28.700 64 64 64H320c35.300 0 64 28.700 64 64V384c0 35.300-28.700 64-64 64H64c-35.300 0-64-28.700-64-64V128zM559.100 99.800c10.400 5.600 16.900 16.400 16.900 28.200V384c0 11.800-6.500 22.600-16.900 28.200s-23 5-32.900-1.600l-96-64L416 337.100V320 192 174.900l14.200-9.500 96-64c9.800-6.500 22.400-7.200 32.900-1.600z"/></svg></div>
<div class="lbl" id="lb2" style="left:1754px;top:576.8px">Spring forest<br>after the<br>snowfall</div>
</div>
</body></html>
